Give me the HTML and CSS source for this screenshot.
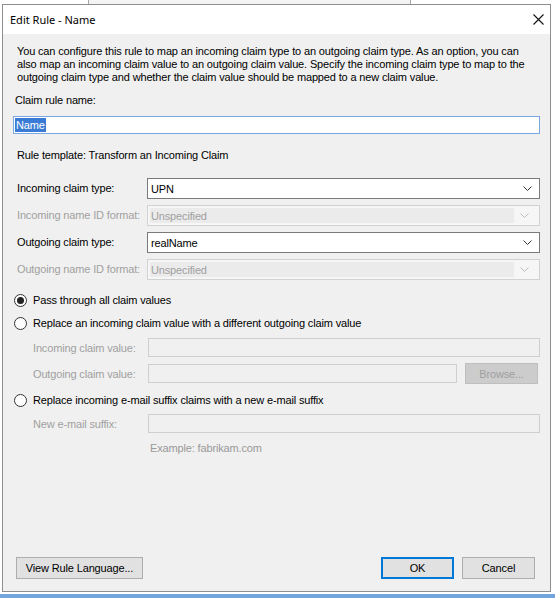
FILE: index.html
```html
<!DOCTYPE html>
<html>
<head>
<meta charset="utf-8">
<title>Edit Rule - Name</title>
<link rel="stylesheet" href="styles.css">
</head>
<body>
<div class="desk"><div class="behind"></div></div>
<div class="window">
  <div class="titlebar">
    <span class="title">Edit Rule - Name</span>
    <svg class="close" width="11" height="11" viewBox="0 0 11 11"><path d="M0.5 0.5 L10.5 10.5 M10.5 0.5 L0.5 10.5" stroke="#111" stroke-width="1.1" fill="none"/></svg>
  </div>
  <div class="content">
    <p class="intro">You can configure this rule to map an incoming claim type to an outgoing claim type. As an option, you can<br>also map an incoming claim value to an outgoing claim value. Specify the incoming claim type to map to the<br>outgoing claim type and whether the claim value should be mapped to a new claim value.</p>
    <div class="rule-name-label">Claim rule name:</div>
    <div class="textbox focus"><span class="sel">Name</span></div>
    <div class="template">Rule template: Transform an Incoming Claim</div>
    <div class="fields">
      <div class="flabel">Incoming claim type:</div>
      <div class="combo"><span class="ctext">UPN</span><span class="arrow"><svg width="9" height="5" viewBox="0 0 9 5"><path d="M0.5 0.5 L4.5 4.5 L8.5 0.5" stroke="#333" fill="none"/></svg></span></div>
      <div class="flabel dis">Incoming name ID format:</div>
      <div class="combo disabled"><span class="ctext">Unspecified</span><span class="arrow"><svg width="9" height="5" viewBox="0 0 9 5"><path d="M0.5 0.5 L4.5 4.5 L8.5 0.5" stroke="#bdbdbd" fill="none"/></svg></span></div>
      <div class="flabel">Outgoing claim type:</div>
      <div class="combo"><span class="ctext">realName</span><span class="arrow"><svg width="9" height="5" viewBox="0 0 9 5"><path d="M0.5 0.5 L4.5 4.5 L8.5 0.5" stroke="#333" fill="none"/></svg></span></div>
      <div class="flabel dis">Outgoing name ID format:</div>
      <div class="combo disabled"><span class="ctext">Unspecified</span><span class="arrow"><svg width="9" height="5" viewBox="0 0 9 5"><path d="M0.5 0.5 L4.5 4.5 L8.5 0.5" stroke="#bdbdbd" fill="none"/></svg></span></div>
    </div>
    <div class="radio r1"><span class="circle checked"></span><span>Pass through all claim values</span></div>
    <div class="radio r2"><span class="circle"></span><span>Replace an incoming claim value with a different outgoing claim value</span></div>
    <div class="subrow s1"><span class="slabel">Incoming claim value:</span><span class="dbox wide"></span></div>
    <div class="subrow s2"><span class="slabel">Outgoing claim value:</span><span class="dbox narrow"></span><span class="btn browse">Browse...</span></div>
    <div class="radio r3"><span class="circle"></span><span>Replace incoming e-mail suffix claims with a new e-mail suffix</span></div>
    <div class="subrow s3"><span class="slabel">New e-mail suffix:</span><span class="dbox wide"></span></div>
    <div class="example">Example: fabrikam.com</div>
    <div class="buttons">
      <span class="btn view">View Rule Language...</span>
      <span class="spacer"></span>
      <span class="btn ok">OK</span>
      <span class="btn cancel">Cancel</span>
    </div>
  </div>
</div>
<div class="gap"></div>
<div class="taskbar"></div>
</body>
</html>
```
FILE: styles.css
```css
html, body {
  margin: 0;
  padding: 0;
  background: #ffffff;
  overflow: hidden;
}
body {
  font-family: "Liberation Sans", Arial, sans-serif;
  font-size: 11px;
  letter-spacing: -0.15px;
  color: #000;
  width: 555px;
  height: 598px;
}
.desk {
  height: 4px;
  display: flex;
}
.behind {
  margin-left: 88px;
  width: 321px;
  border-left: 1px solid #a8a8a8;
  border-right: 1px solid #a8a8a8;
  background: #f4f4f4;
}
.window {
  margin-left: 2px;
  width: 549px;
  height: 588px;
  box-sizing: border-box;
  border: 1px solid #8e8e8e;
  background: #f0f0f0;
  display: flex;
  flex-direction: column;
}
.titlebar {
  height: 29px;
  flex: none;
  background: #fff;
  display: flex;
  align-items: center;
  justify-content: space-between;
  padding: 0 6px 0 7px;
}
.title {
  font-family: "Noto Sans", "Open Sans", sans-serif;
  font-size: 11px;
  letter-spacing: 0;
  color: #000;
}
.close {
  display: block;
}
.content {
  flex: 1;
  display: flex;
  flex-direction: column;
  padding: 11px 9px 12px 10px;
}
.intro {
  margin: 0 0 0 4px;
  line-height: 13px;
  white-space: nowrap;
}
.rule-name-label {
  margin: 10px 0 0 2px;
  line-height: 13px;
}
.textbox {
  margin-top: 9px;
  width: 527px;
  height: 18px;
  box-sizing: border-box;
  background: #fff;
  border: 1px solid #7aa6e4;
  padding: 1px 0 0 1px;
  line-height: 14px;
}
.sel {
  display: inline-block;
  background: #3a7bd5;
  color: #fff;
  padding: 0 1px;
  line-height: 14px;
}
.template {
  margin: 15px 0 0 4px;
  line-height: 13px;
}
.fields {
  margin-top: 16px;
  display: grid;
  grid-template-columns: 134px 393px;
  grid-auto-rows: 21px;
  row-gap: 6px;
  align-items: center;
}
.flabel {
  padding-left: 4px;
  line-height: 13px;
  white-space: nowrap;
}
.dis {
  color: #a0a0a0;
}
.combo {
  height: 21px;
  box-sizing: border-box;
  border: 1px solid #7a7a7a;
  background: #fff;
  display: flex;
  align-items: center;
}
.ctext {
  flex: 1;
  padding-left: 3px;
}
.arrow {
  width: 20px;
  display: flex;
  align-items: center;
  justify-content: center;
  padding-right: 2px;
}
.arrow svg {
  display: block;
}
.combo.disabled {
  border-color: #d2d2d2;
  background: #f6f6f6;
  padding: 2px;
  color: #a0a0a0;
}
.combo.disabled .ctext {
  align-self: stretch;
  display: flex;
  align-items: center;
  background: #ebebeb;
  padding-left: 1px;
}
.combo.disabled .arrow {
  width: 21px;
}
.radio {
  display: flex;
  align-items: center;
  height: 16px;
  margin-left: 1px;
  gap: 6px;
}
.r1 { margin-top: 12px; }
.r2 { margin-top: 7px; }
.r3 { margin-top: 8px; }
.circle {
  flex: none;
  width: 13px;
  height: 13px;
  box-sizing: border-box;
  border: 1px solid #333;
  border-radius: 50%;
  background: #fff;
  display: flex;
  align-items: center;
  justify-content: center;
}
.circle.checked::after {
  content: "";
  width: 7px;
  height: 7px;
  border-radius: 50%;
  background: #222;
}
.subrow {
  display: flex;
  align-items: center;
  height: 21px;
}
.s1 { margin-top: 6px; }
.s2 { margin-top: 5px; }
.s3 { margin-top: 5px; }
.slabel {
  flex: none;
  width: 115px;
  padding-left: 20px;
  color: #a0a0a0;
  white-space: nowrap;
}
.dbox {
  flex: none;
  height: 19px;
  box-sizing: border-box;
  border: 1px solid #cfcfcf;
  background: #f0f0f0;
}
.dbox.wide { width: 392px; }
.dbox.narrow { width: 309px; }
.btn {
  flex: none;
  box-sizing: border-box;
  height: 22px;
  display: flex;
  align-items: center;
  justify-content: center;
  background: #e1e1e1;
  border: 1px solid #adadad;
  color: #000;
}
.browse {
  margin-left: 8px;
  width: 73px;
  height: 21px;
  background: #cccccc;
  border-color: #bfbfbf;
  color: #a0a0a0;
}
.example {
  margin: 8px 0 0 137px;
  line-height: 13px;
  color: #999;
}
.buttons {
  margin-top: auto;
  margin-right: 6px;
  display: flex;
  align-items: center;
  gap: 8px;
}
.view {
  margin-left: 3px;
  width: 127px;
}
.spacer {
  flex: 1;
}
.ok, .cancel {
  width: 73px;
}
.ok {
  border-color: #0078d7;
  box-shadow: inset 0 0 0 1px #0078d7;
}
.gap {
  height: 2px;
}
.taskbar {
  height: 10px;
  background: #74a4dc;
}
```
